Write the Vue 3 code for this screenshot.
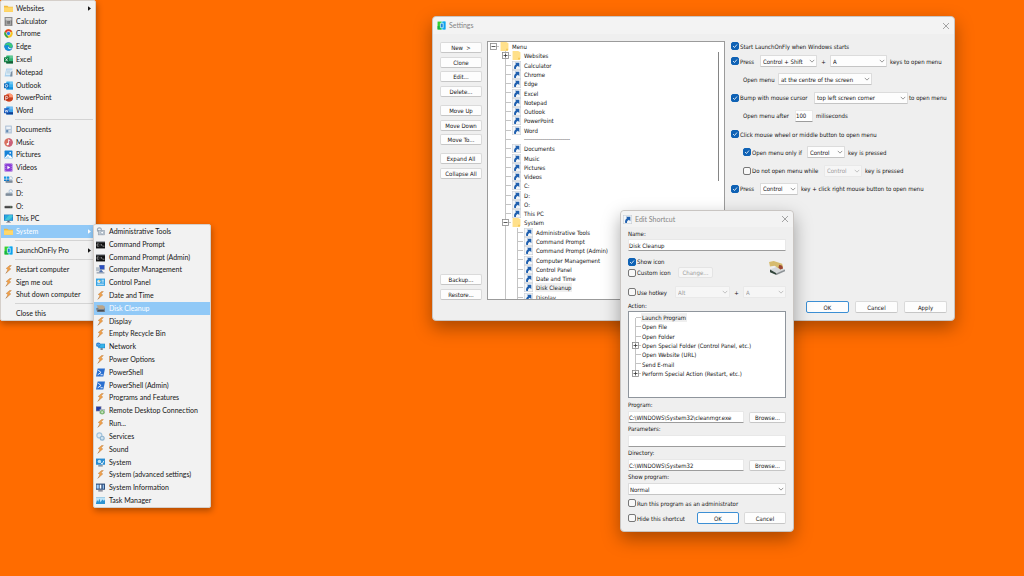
<script setup>
import { ref } from 'vue'

const bolt = '<path d="M10 1 4 6l3 2-3 6 8-7-3-2 4-4z" fill="#f3a24a" stroke="#b9783a" stroke-width=".8"/><path d="M5 13l-2 2" stroke="#8a6a50"/>'
const logo = '<path d="M1 1h7v14H1z" fill="#35d12f"/><path d="M1 9h7v6H1z" fill="#18b542"/><path d="M8 1h7v14H8z" fill="#12c4f2"/><path d="M11 1h4v14h-4z" fill="#10a0f0"/><path d="M6 4h5v8H6z" fill="#1c84dc" stroke="#d8f7f4" stroke-width="1.400"/>'
const office = (c, d, l) =>
  `<rect x="4" y="1" width="12" height="14" rx="1" fill="${l}"/><path d="M10 1h6v5h-6z" fill="#fff" opacity=".25"/><path d="M4 11h12v4H4z" fill="${d}"/><rect x="0" y="4" width="9" height="9" rx="1" fill="${c}"/>`
const drive = '<path d="M3 8l2-2h8l2 2v4H3z" fill="#aeb9c4"/><path d="M3 8h12v4H3z" fill="#7e8b99"/><circle cx="12" cy="4" r="3" fill="none" stroke="#a9c3dc" stroke-width="1.5"/>'
const cmd = '<rect x="0" y="2" width="16" height="13" fill="#111"/><path d="M0 2h16v2H0z" fill="#b8bcc2"/><path d="M5 7H2v4h3M7 7v1M7 10v1M9 7l2 4M12 11h3" fill="none" stroke="#ddd" stroke-width="1"/>'
const ps = '<path d="M3 1h13l-3 14H0z" fill="#2a6fd0"/><path d="M4 4l5 4-6 4M8 12h4" fill="none" stroke="#fff" stroke-width="1.6"/>'
const folder = '<path d="M0 3h6l2 2h8v9H0z" fill="#f0b93e"/><path d="M0 6h16v8H0z" fill="#ffd76b"/>'
const icons = {
  bolt, logo, cmd, ps, folder,
  calc: '<rect x="1" y="0" width="14" height="16" fill="#8b8b8b"/><path d="M3 2h10v3H3z" fill="#ddd"/><path d="M4 7v7M7 7v7M10 7v7M12.500 7v7" stroke="#555" stroke-width="1.6" stroke-dasharray="1.500 1"/><rect x="5" y="6" width="6" height="8" fill="none" stroke="#d5d5d5"/>',
  chrome: '<circle cx="8" cy="8" r="7.500" fill="#f7c31c"/><path d="M1.500 4.300A7.500 7.500 0 0 1 14.800 5H8L5 9z" fill="#e23b2e"/><path d="M1.500 4.300 5.500 10.500 8 15.500A7.500 7.500 0 0 1 1.500 4.300z" fill="#2da44e"/><circle cx="8" cy="8" r="3.800" fill="#fff"/><circle cx="8" cy="8" r="2.900" fill="#2b7de9"/>',
  edge: '<circle cx="8" cy="8" r="7.500" fill="#1a77c9"/><path d="M1 7C2 0 14-1 15.500 7c0 3-4 4-6 2.500C11 7 7 4 1 7z" fill="#3dc97a"/><path d="M1 7c4-3 8-2 8 2-2-1-1 4 5 4-4 4-13 3-13-6z" fill="#1390d6"/><path d="M8 8c-2 3 0 5 5 5l2-2c-3 1-6 0-7-3z" fill="#eef7ff"/>',
  excel: office('#107c41', '#185c37', '#2fb673') + '<path d="M2.500 6l4 5M6.500 6l-4 5" stroke="#fff" stroke-width="1.3"/>',
  outlook: office('#0f6cbd', '#1390df', '#38b0ee') + '<circle cx="4.500" cy="8.500" r="2.300" fill="none" stroke="#fff" stroke-width="1.3"/>',
  ppt: '<circle cx="9" cy="8" r="7" fill="#ed6c47"/><path d="M9 1a7 7 0 0 1 7 7H9z" fill="#ff9a75"/><path d="M2 8h14a7 7 0 0 1-14 0z" fill="#c9401f"/><rect x="0" y="4" width="9" height="9" rx="1" fill="#b83214"/><path d="M3 12V6h2a1.800 1.800 0 0 1 0 4H3" fill="none" stroke="#fff" stroke-width="1.3"/>',
  word: office('#185abd', '#103f91', '#41a5ee') + '<path d="M1.500 6l1.500 5 1.500-4L6 11l1.500-5" fill="none" stroke="#fff" stroke-width="1.1"/>',
  notepad: '<path d="M4 1h11l-2 14H1z" fill="#a9d0ec"/><path d="M5 3h9l-2 9H3z" fill="#e9f4fb"/><path d="M5 5h7M5 7h6M4 9h7" stroke="#7fa7c4" stroke-width=".8"/><path d="M12 8l3-3v10h-4z" fill="#7b8fa3"/>',
  docs: '<rect x="2" y="1" width="12" height="14" rx="1" fill="#b4c5d8"/><rect x="4" y="3" width="8" height="4" fill="#eef3f8"/><rect x="4" y="9" width="3" height="4" fill="#5e86b0"/><path d="M9 10h3M9 12h3" stroke="#fff"/>',
  music: '<circle cx="8" cy="8" r="7.500" fill="#d8705e"/><path d="M8 .5a7.500 7.500 0 0 1 0 15z" fill="#c9607a"/><circle cx="6.500" cy="11" r="2" fill="#fff"/><path d="M8 11V3l3 2" fill="none" stroke="#fff" stroke-width="1.4"/>',
  pictures: '<rect x="1" y="1" width="14" height="14" rx="1" fill="#1683d8"/><path d="M1 14l6-7 3 3 1-1 4 5v1H1z" fill="#fff"/><path d="M2 15l5-5 4 5z" fill="#b7dcf5"/><circle cx="11" cy="5" r="1.500" fill="#fff"/>',
  videos: '<rect x="1" y="1" width="14" height="14" rx="1" fill="#8b3fd6"/><path d="M3 2v12M13 2v12" stroke="#d9b9f5" stroke-dasharray="1.500 2"/><path d="M6 5l5 3-5 3z" fill="#fff"/>',
  driveC: drive + '<path d="M0 1h4v4H0zM5 1h4v4H5z" fill="#1597e5"/><path d="M0 6h4v3H0zM5 6h4v3H5z" fill="#0c78c8"/>',
  driveD: drive,
  driveO: '<rect x="1" y="7" width="14" height="4" rx="1" fill="#444"/><path d="M2 7h12" stroke="#999"/><path d="M11 9h2" stroke="#7d7"/>',
  pc: '<rect x="0" y="1" width="16" height="11" fill="#1b75bb"/><path d="M1 2h14v9H1z" fill="#2ba8e0"/><path d="M1 11l8-9h6v3l-7 6z" fill="#45c7d8"/><path d="M6 12h4v2H6zM4 14h8v1H4z" fill="#667"/>',
  admin: '<circle cx="6" cy="5" r="3.500" fill="none" stroke="#9aa8b5" stroke-width="2"/><rect x="4" y="6" width="11" height="8" fill="#c3ccd4" stroke="#8e9ba8"/><circle cx="11" cy="10" r="2.500" fill="#fff" stroke="#7f93a6"/>',
  mgmt: '<rect x="6" y="0" width="9" height="8" fill="#2c4fc0" stroke="#8793a5"/><rect x="0" y="4" width="7" height="7" fill="#b5bfca"/><path d="M1 13h14v2H1z" fill="#8693a3"/><path d="M9 8l4 5H5z" fill="#4c6fae"/>',
  panel: '<rect x="0" y="1" width="16" height="13" fill="#35a3e3"/><circle cx="5" cy="6" r="3" fill="#d5f0ff"/><path d="M5 6V3a3 3 0 0 1 3 3z" fill="#f6b73c"/><path d="M10 4h4M10 7h4M2 11h12" stroke="#fff" stroke-width="1.4"/>',
  disk: '<path d="M0 8l3-2h12l1 3v5H2z" fill="#77818b"/><path d="M1 2h11l4 3-2 4H5z" fill="#b9a58a"/><path d="M3 11h11v2H3z" fill="#3d434a"/>',
  network: '<rect x="4" y="3" width="12" height="8" fill="#1d86cf"/><path d="M5 4h10v6H5z" fill="#37b4e8"/><rect x="8" y="11" width="4" height="3" fill="#6b7a88"/><circle cx="4" cy="5" r="4" fill="#2f7fd0"/><path d="M1 4c2 2 4-2 6 1M2 8c1-2 3-1 4-2" stroke="#7fd8ff" fill="none"/>',
  rdp: '<rect x="0" y="1" width="9" height="8" fill="#243ba5" stroke="#99a"/><rect x="7" y="6" width="8" height="7" fill="#dfe6ec" stroke="#8997a5"/><circle cx="11" cy="11" r="4" fill="#79b76b"/><path d="M9 11h4M11 9v4" stroke="#fff"/>',
  services: '<circle cx="6" cy="6" r="4.500" fill="#dfeaf2" stroke="#a3c3dc" stroke-width="2"/><circle cx="11" cy="11" r="3.500" fill="#cfe2ef" stroke="#8db2ce" stroke-width="2"/>',
  system: '<rect x="0" y="1" width="16" height="11" fill="#2a8dd2"/><circle cx="6" cy="6" r="3" fill="#bfe3f7"/><path d="M8 8l3 3 3-6" stroke="#fff" stroke-width="1.5" fill="none"/><path d="M4 13h8v2H4z" fill="#5f7386"/>',
  sysinfo: '<rect x="0" y="1" width="16" height="11" fill="#33507c"/><rect x="1" y="3" width="4" height="7" fill="#9fd0ff"/><path d="M8 3v7" stroke="#fff" stroke-width="3"/><path d="M13 3v7" stroke="#9fd0ff" stroke-width="2"/><path d="M4 13h8v2H4z" fill="#667"/>',
  task: '<rect x="0" y="2" width="16" height="12" fill="#bfe4f7"/><path d="M0 13l2-6 2 3 2-5 2 6 2-3 2-2 2 3 2-3v8H0z" fill="#2c93d2"/><path d="M0 2h16v1H0z" fill="#86bcd9"/>',
  treeFolder: '<path d="M1 0h10l4 2v12l-2 2H1z" fill="#ffe08a"/><path d="M11 12h3v3h-3z" fill="#f3c44f"/>',
  link: '<rect x=".5" y=".5" width="15" height="15" fill="#f4f6f8" stroke="#c5ccd3"/><path d="M5 3h8v8l-2.500-2.500C7.500 10 7 11.500 7 14H4c-1-3 0-6 3.500-8.500z" fill="#1f5fae"/>',
  cleanup: '<path d="M1 10l8-3 8 3-8 4-8-3z" fill="#d5d8da"/><path d="M1 10l7 4v2l-7-3z" fill="#30433a"/><path d="M8 14l9-4v2l-9 4z" fill="#8d9296"/><path d="M0 2l5-1 9 3 1 4-3 2-6-4-5 1z" fill="#d6bb6e"/><path d="M11 5l3 1 1 3-3 1-2-2z" fill="#9c4634"/>'
}

const mainMenu = [
  ['folder', 'Websites', 1], ['calc', 'Calculator'], ['chrome', 'Chrome'], ['edge', 'Edge'], ['excel', 'Excel'],
  ['notepad', 'Notepad'], ['outlook', 'Outlook'], ['ppt', 'PowerPoint'], ['word', 'Word'], null,
  ['docs', 'Documents'], ['music', 'Music'], ['pictures', 'Pictures'], ['videos', 'Videos'], ['driveC', 'C:'],
  ['driveD', 'D:'], ['driveO', 'O:'], ['pc', 'This PC'], ['folder', 'System', 1, 1], null,
  ['logo', 'LaunchOnFly Pro', 1], null,
  ['bolt', 'Restart computer'], ['bolt', 'Sign me out'], ['bolt', 'Shut down computer'], null, ['', 'Close this']
]
const subMenu = [
  ['admin', 'Administrative Tools'], ['cmd', 'Command Prompt'], ['cmd', 'Command Prompt (Admin)'],
  ['mgmt', 'Computer Management'], ['panel', 'Control Panel'], ['bolt', 'Date and Time'],
  ['disk', 'Disk Cleanup', 0, 1], ['bolt', 'Display'], ['bolt', 'Empty Recycle Bin'], ['network', 'Network'],
  ['bolt', 'Power Options'], ['ps', 'PowerShell'], ['ps', 'PowerShell (Admin)'], ['bolt', 'Programs and Features'],
  ['rdp', 'Remote Desktop Connection'], ['bolt', 'Run...'], ['services', 'Services'], ['bolt', 'Sound'],
  ['system', 'System'], ['bolt', 'System (advanced settings)'], ['sysinfo', 'System Information'], ['task', 'Task Manager']
]
const menus = [{ id: 'primary-menu', items: mainMenu }, { id: 'system-menu', items: subMenu }]

const buttonGroups = [
  ['New  >', 'Clone', 'Edit...', 'Delete...'],
  ['Move Up', 'Move Down', 'Move To...'],
  ['Expand All', 'Collapse All'],
  ['Backup...', 'Restore...']
]

const leaf = (depth) => (label) => ({ depth, label, icon: 'link' })
const tree = [
  { depth: 0, label: 'Menu', icon: 'treeFolder', box: '-' },
  { depth: 1, label: 'Websites', icon: 'treeFolder', box: '+' },
  ...['Calculator', 'Chrome', 'Edge', 'Excel', 'Notepad', 'Outlook', 'PowerPoint', 'Word'].map(leaf(1)),
  { depth: 1, label: '-----------------------', icon: '', dashes: true },
  ...['Documents', 'Music', 'Pictures', 'Videos', 'C:', 'D:', 'O:', 'This PC'].map(leaf(1)),
  { depth: 1, label: 'System', icon: 'treeFolder', box: '-' },
  ...['Administrative Tools', 'Command Prompt', 'Command Prompt (Admin)', 'Computer Management', 'Control Panel',
    'Date and Time', 'Disk Cleanup', 'Display'].map(leaf(2))
]
const boxPath = { '-': 'M1.500 3.500h4', '+': 'M1.500 3.500h4M3.500 1.500v4' }
const actions = [
  ['Launch Program'], ['Open File'], ['Open Folder'], ['Open Special Folder (Control Panel, etc.)', 1],
  ['Open Website (URL)'], ['Send E-mail'], ['Perform Special Action (Restart, etc.)', 1]
]

const name = ref('Disk Cleanup')
const program = ref('C:\\WINDOWS\\System32\\cleanmgr.exe')
const params = ref('')
const directory = ref('C:\\WINDOWS\\System32')
const delay = ref('100')
</script>

<template>
  <main class="desktop">
    <nav v-for="m in menus" :key="m.id" class="menu" :class="m.id">
      <ul>
        <template v-for="(it, i) in m.items" :key="i">
          <li v-if="!it" class="sep" role="separator"></li>
          <li v-else class="entry">
            <button type="button" class="item" :class="{ active: it[3] }">
              <svg class="ico" viewBox="0 0 16 16" v-html="icons[it[0]]"></svg>
              <span>{{ it[1] }}</span>
              <svg v-if="it[2]" class="arrow" viewBox="0 0 4 6"><path d="M0 0l4 3-4 3z" /></svg>
            </button>
          </li>
        </template>
      </ul>
    </nav>

    <section class="window settings">
      <header class="bar">
        <svg class="ico" viewBox="0 0 16 16" v-html="icons.logo"></svg>
        <h1>Settings</h1>
        <button type="button" class="close" aria-label="Close"><svg viewBox="0 0 8 8"><path d="M1 1l6 6M7 1L1 7" /></svg></button>
      </header>
      <div class="content">
        <div class="side">
          <div v-for="(g, i) in buttonGroups" :key="i" class="group" :class="'n' + g.length">
            <button v-for="b in g" :key="b" type="button" class="btn">{{ b }}</button>
          </div>
        </div>
        <div class="treebox">
          <ul class="tree">
            <li v-for="(n, i) in tree" :key="i">
              <span v-for="d in n.depth" :key="d" class="rail" :class="{ trunk: d > 1 }"></span>
              <span class="rail node" :class="{ first: !n.depth }">
                <svg v-if="n.box" class="box" viewBox="0 0 7 7"><rect x=".5" y=".5" width="6" height="6" /><path :d="boxPath[n.box]" /></svg>
              </span>
              <svg class="ico" viewBox="0 0 16 16" v-html="icons[n.icon]"></svg>
              <span class="label" :class="{ picked: n.label === 'Disk Cleanup', dashes: n.dashes }">{{ n.label }}</span>
            </li>
          </ul>
          <span class="thumb"></span>
        </div>
        <form class="options" @submit.prevent>
          <label class="check"><input type="checkbox" checked />Start LaunchOnFly when Windows starts</label>
          <div class="rows">
            <div class="row">
              <label class="check w29"><input type="checkbox" checked />Press</label>
              <span class="sel w57"><select aria-label="Modifier keys"><option>Control + Shift</option></select><svg viewBox="0 0 8 5"><path d="M1 1l3 3 3-3" /></svg></span>
              <span class="plus">+</span>
              <span class="sel w57"><select aria-label="Key"><option>A</option></select><svg viewBox="0 0 8 5"><path d="M1 1l3 3 3-3" /></svg></span>
              <span class="near">keys to open menu</span>
            </div>
            <div class="row inset">
              <label class="w35" for="place">Open menu</label>
              <span class="sel w94"><select id="place"><option>at the centre of the screen</option></select><svg viewBox="0 0 8 5"><path d="M1 1l3 3 3-3" /></svg></span>
            </div>
            <div class="row">
              <label class="check w83"><input type="checkbox" checked />Bump with mouse cursor</label>
              <span class="sel w94"><select aria-label="Screen corner"><option>top left screen corner</option></select><svg viewBox="0 0 8 5"><path d="M1 1l3 3 3-3" /></svg></span>
              <span class="close-by">to open menu</span>
            </div>
            <div class="row inset">
              <label class="w52" for="delay">Open menu after</label>
              <input id="delay" v-model="delay" class="field w18" type="text" />
              <span class="near">miliseconds</span>
            </div>
            <label class="check row"><input type="checkbox" checked />Click mouse wheel or middle button to open menu</label>
            <div class="row inset">
              <label class="check w64"><input type="checkbox" checked />Open menu only if</label>
              <span class="sel w38"><select aria-label="Required key"><option>Control</option></select><svg viewBox="0 0 8 5"><path d="M1 1l3 3 3-3" /></svg></span>
              <span class="near">key is pressed</span>
            </div>
            <div class="row inset">
              <label class="check w81"><input type="checkbox" />Do not open menu while</label>
              <span class="sel w38 off"><select aria-label="Blocking key" disabled><option>Control</option></select><svg viewBox="0 0 8 5"><path d="M1 1l3 3 3-3" /></svg></span>
              <span class="near">key is pressed</span>
            </div>
            <div class="row">
              <label class="check w29"><input type="checkbox" checked />Press</label>
              <span class="sel w38"><select aria-label="Click key"><option>Control</option></select><svg viewBox="0 0 8 5"><path d="M1 1l3 3 3-3" /></svg></span>
              <span class="near">key + click right mouse button to open menu</span>
            </div>
          </div>
          <div class="actions">
            <button type="submit" class="btn primary">OK</button>
            <button type="button" class="btn">Cancel</button>
            <button type="button" class="btn">Apply</button>
          </div>
        </form>
      </div>
    </section>

    <section class="window edit">
      <header class="bar">
        <svg class="ico" viewBox="0 0 16 16" v-html="icons.link"></svg>
        <h1>Edit Shortcut</h1>
        <button type="button" class="close" aria-label="Close"><svg viewBox="0 0 8 8"><path d="M1 1l6 6M7 1L1 7" /></svg></button>
      </header>
      <form class="fields" @submit.prevent>
        <label class="cap tight" for="name">Name:</label>
        <input id="name" v-model="name" class="field" type="text" />
        <div class="iconrow">
          <div class="stack">
            <label class="check"><input type="checkbox" checked />Show icon</label>
            <div class="line">
              <label class="check w50"><input type="checkbox" />Custom icon</label>
              <button type="button" class="btn off w35" disabled>Change...</button>
            </div>
          </div>
          <svg class="preview" viewBox="0 0 17 16" v-html="icons.cleanup"></svg>
        </div>
        <div class="line hot">
          <label class="check w47"><input type="checkbox" />Use hotkey</label>
          <span class="sel w55 off"><select aria-label="Hotkey modifier" disabled><option>Alt</option></select><svg viewBox="0 0 8 5"><path d="M1 1l3 3 3-3" /></svg></span>
          <span class="plus">+</span>
          <span class="sel grow off"><select aria-label="Hotkey" disabled><option>A</option></select><svg viewBox="0 0 8 5"><path d="M1 1l3 3 3-3" /></svg></span>
        </div>
        <span class="cap tight">Action:</span>
        <div class="actionbox">
          <ul class="tree">
            <li v-for="(a, i) in actions" :key="a[0]">
              <span class="rail node" :class="{ top: i === 0, end: i === actions.length - 1 }">
                <svg v-if="a[1]" class="box" viewBox="0 0 7 7"><rect x=".5" y=".5" width="6" height="6" /><path :d="boxPath['+']" /></svg>
              </span>
              <span class="label" :class="{ picked: i === 0 }">{{ a[0] }}</span>
            </li>
          </ul>
        </div>
        <label class="cap low" for="program">Program:</label>
        <div class="line"><input id="program" v-model="program" class="field grow" type="text" /><button type="button" class="btn browse">Browse...</button></div>
        <label class="cap" for="params">Parameters:</label>
        <input id="params" v-model="params" class="field" type="text" />
        <label class="cap" for="directory">Directory:</label>
        <div class="line"><input id="directory" v-model="directory" class="field grow" type="text" /><button type="button" class="btn browse">Browse...</button></div>
        <label class="cap" for="show">Show program:</label>
        <span class="sel"><select id="show"><option>Normal</option></select><svg viewBox="0 0 8 5"><path d="M1 1l3 3 3-3" /></svg></span>
        <label class="check run"><input type="checkbox" />Run this program as an administrator</label>
        <div class="line foot">
          <label class="check grow"><input type="checkbox" />Hide this shortcut</label>
          <button type="submit" class="btn primary">OK</button>
          <button type="button" class="btn">Cancel</button>
        </div>
      </form>
    </section>
  </main>
</template>

<style>
body { background: #ff6c00; }
</style>

<style scoped>
.desktop {
  position: relative;
  min-height: 100vh;
  overflow: hidden;
  background: #ff6c00;
  color: #151515;
  font: 6px/9px "DejaVu Sans Condensed", "DejaVu Sans", sans-serif;
}
.desktop * { box-sizing: border-box; }
ul { list-style: none; margin: 0; padding: 0; }
button, input, select { font: inherit; color: inherit; margin: 0; }
.ico { width: 9px; height: 9px; flex: none; display: block; }

/* pop-up menus */
.menu {
  position: absolute;
  background: #f2f2f2;
  border: 1px solid #d5cfca;
  border-radius: 2px;
  font: 7px/9px Lato, "Open Sans", sans-serif;
  box-shadow: 1px 3px 6px rgba(0, 0, 0, .3);
}
.menu ul { display: flex; flex-direction: column; height: 100%; }
.primary-menu { left: 0; top: 0; width: 96px; height: 321px; padding-top: 1px; }
.system-menu { left: 93px; top: 224px; width: 118px; height: 284px; }
.entry { flex: 1; display: flex; min-height: 0; }
.item {
  flex: 1;
  display: flex;
  align-items: center;
  gap: 3px;
  padding: 0 4px 0 2px;
  border: 0;
  background: none;
  text-align: left;
  white-space: nowrap;
}
.primary-menu .item { padding-left: 3px; }
.system-menu .item { gap: 4px; }
.item.active { background: #91c9f7; color: #fff; }
.arrow { width: 3px; height: 5px; margin-left: auto; fill: currentColor; }
.sep { flex: none; height: 6px; padding: 2px 2px 0 14px; }
.sep::before { content: ""; display: block; height: 1px; background: #d4d4d4; }

/* windows */
.window {
  position: absolute;
  display: flex;
  flex-direction: column;
  background: #efefef;
  border: 1px solid #c9c5c2;
  border-radius: 4px;
  box-shadow: 0 7px 18px rgba(0, 0, 0, .34);
}
.settings { left: 432px; top: 16px; width: 523px; height: 305px; }
.edit { left: 620px; top: 210px; width: 174px; height: 322px; }
.bar {
  flex: none;
  display: flex;
  align-items: center;
  gap: 3px;
  height: 17px;
  padding: 0 4px;
  background: #f3f3f3;
  border-radius: 4px 4px 0 0;
  color: #858585;
}
.edit .bar { height: 16px; padding-left: 2px; }
.bar h1 { margin: 0; font: 7px/9px Lato, "Open Sans", sans-serif; }
.close { margin-left: auto; width: 8px; height: 8px; padding: 0; border: 0; background: none; display: flex; }
.close svg { width: 8px; height: 8px; fill: none; stroke: #8e8e8e; stroke-width: .8; }

.btn {
  height: 11px;
  padding: 0;
  border: 1px solid #dadada;
  border-bottom-color: #c6c6c6;
  border-radius: 2px;
  background: #fdfdfd;
  text-align: center;
  line-height: 9px;
  white-space: pre;
}
.btn.primary { border-color: #3c8fd4; }
.btn.off { background: #f6f6f6; border-color: #e4e4e4; color: #9a9a9a; }

.field {
  height: 12px;
  min-width: 0;
  padding: 0;
  border: 1px solid #e8e8e8;
  border-bottom: 1px solid #9c9c9c;
  border-radius: 1px;
  background: #fff;
  outline: none;
}
.sel { position: relative; flex: none; display: flex; height: 12px; }
.sel select {
  appearance: none;
  width: 100%;
  height: 12px;
  padding: 0 0 0 2px;
  border: 1px solid #dcdcdc;
  border-bottom-color: #c4c4c4;
  border-radius: 1px;
  background: #fdfdfd;
  opacity: 1;
}
.fields > .sel select { padding-left: 1px; }
.sel svg { position: absolute; right: 2px; top: 4px; width: 6px; height: 4px; fill: none; stroke: #777; pointer-events: none; }
.sel.off select { background: #f6f6f6; border-color: #e9e9e9; color: #9a9a9a; }
.sel.off svg { stroke: #b0b0b0; }

.check { display: flex; align-items: center; gap: 1px; white-space: nowrap; flex: none; }
.check input {
  appearance: none;
  width: 8px;
  height: 8px;
  flex: none;
  border: 1px solid #777;
  border-radius: 2px;
  background: #f8f8f8;
}
.check input:checked {
  border-color: #0f62b5;
  background: #0f62b5 url("data:image/svg+xml,%3Csvg xmlns='http://www.w3.org/2000/svg' viewBox='0 0 6 6'%3E%3Cpath d='M1 3l1.500 1.500L5 1.500' fill='none' stroke='white' stroke-width='.8'/%3E%3C/svg%3E") center / 6px 6px no-repeat;
}

/* settings layout */
.content { flex: 1; display: flex; min-height: 0; padding: 7px 7px 6px; }
.side { width: 42px; display: flex; flex-direction: column; gap: 8px; padding: 1px 0 14px; }
.group { display: flex; flex-direction: column; justify-content: space-between; }
.n4 { height: 55px; }
.n3 { height: 40px; }
.n2 { height: 26px; }
.group:last-child { margin-top: auto; }
.treebox {
  width: 238px;
  margin: 0 6px 14px 5px;
  display: flex;
  justify-content: space-between;
  overflow: hidden;
  background: #fff;
  border: 1px solid #9b9b9b;
}
.treebox .tree { height: 260px; }
.tree { display: flex; flex-direction: column; }
.tree li { flex: 1; display: flex; align-items: stretch; min-height: 0; white-space: nowrap; }
.tree .ico { align-self: center; }
.label { align-self: center; margin-left: 2px; padding: 0 1px; }
.dashes { font-family: "Liberation Sans", sans-serif; }
.picked { background: #efefef; }
.rail { width: 12px; flex: none; display: flex; align-items: center; }
.trunk { background: linear-gradient(#c4c4c4, #c4c4c4) 5px 0 / 1px 100% no-repeat; }
.treebox .trunk { background-position: 5px 0; }
.node {
  background:
    linear-gradient(#c4c4c4, #c4c4c4) 5px 0 / 1px 100% no-repeat,
    linear-gradient(#c4c4c4, #c4c4c4) 6px 4px / 5px 1px no-repeat;
}
.node.first { background: linear-gradient(#c4c4c4, #c4c4c4) 6px 4px / 5px 1px no-repeat; }
.box { width: 7px; height: 7px; margin-left: 2px; fill: #fff; stroke: #8b8b8b; stroke-width: .8; }
.box path { stroke: #333; }
.thumb { width: 1px; height: 129px; margin: 10px 5px 0 0; background: #858585; }

.options { flex: 1; display: flex; flex-direction: column; }
.options > .check { height: 10px; }
.rows { display: flex; flex-direction: column; justify-content: space-between; height: 140px; margin-top: 4px; }
.row { display: flex; align-items: center; height: 12px; white-space: nowrap; }
.inset { padding-left: 12px; }
.plus { width: 13px; text-align: center; }
.near { margin-left: 3px; }
.close-by { margin-left: 1px; }
.w18 { width: 18px; } .w29 { width: 29px; } .w35 { width: 35px; } .w38 { width: 38px; }
.w47 { width: 47px; } .w50 { width: 50px; } .w52 { width: 52px; } .w55 { width: 55px; }
.w57 { width: 57px; } .w64 { width: 64px; } .w81 { width: 81px; } .w83 { width: 83px; } .w94 { width: 94px; }
.grow { flex: 1; }
.actions { display: flex; justify-content: flex-end; gap: 6px; margin-top: auto; padding-bottom: 1px; }
.actions .btn, .foot .btn { width: 43px; height: 12px; }

/* shortcut dialog layout */
.fields { display: flex; flex-direction: column; padding: 1px 7px 7px; }
.cap { height: 12px; line-height: 12px; }
.cap.tight { height: 11px; }
.line { display: flex; align-items: center; }
.iconrow { display: flex; justify-content: space-between; align-items: center; margin-top: 5px; }
.stack { display: flex; flex-direction: column; }
.stack > * { height: 11px; }
.preview { width: 18px; height: 15px; }
.hot { margin: 8px 0 2px; }
.actionbox { height: 87px; border: 1px solid #8f959c; background: #fff; padding: 1px 0 0 1px; }
.actionbox .tree { height: 65px; }
.actionbox .label { margin-left: -1px; }
.node.top { background-position: 5px 5px, 6px 4px; }
.node.end { background-size: 1px 5px, 5px 1px; }
.low { margin-top: 1px; }
.browse { width: 37px; margin-left: 5px; }
.run { margin-top: 3px; height: 10px; }
.foot { margin-top: 4px; gap: 5px; }
.foot .btn { width: 42px; }
</style>
